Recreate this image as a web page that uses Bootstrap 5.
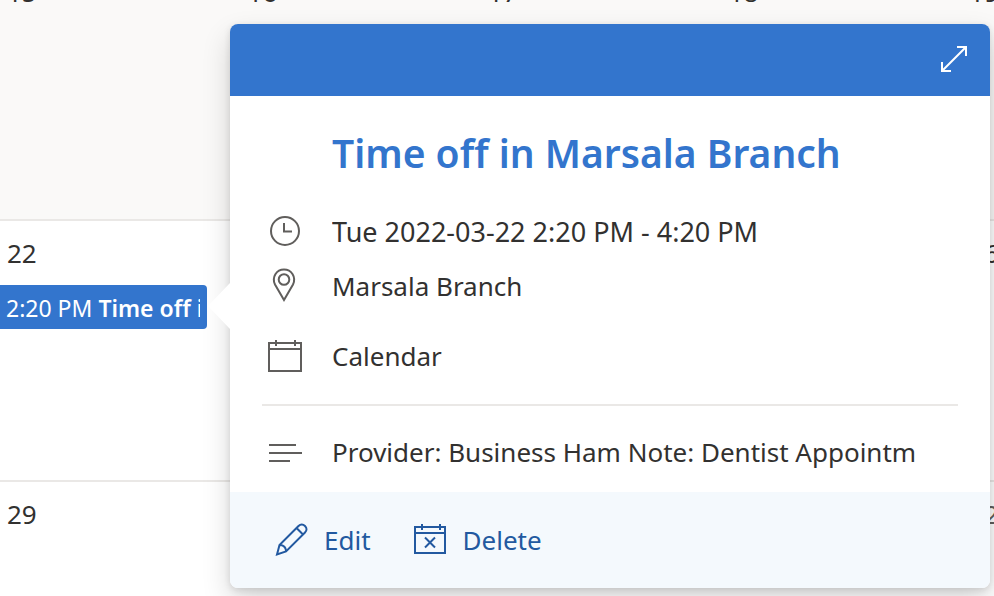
<!DOCTYPE html>
<html lang="en">
<head>
<meta charset="utf-8">
<meta name="viewport" content="width=device-width, initial-scale=1">
<title>Calendar</title>
<link href="https://cdn.jsdelivr.net/npm/bootstrap@5.3.0/dist/css/bootstrap.min.css" rel="stylesheet">
<style>
body { font-family: "Noto Sans", "Open Sans", sans-serif; font-size: 26px; line-height: 34px; color: #323130; background: #fff; }
/* The month is scrolled down a little, so its first week is partly out of view. */
.month-grid { display: grid; grid-template-columns: repeat(5, 24.2%); grid-auto-rows: 261px; margin-top: -42px; }
.day { border-top: 2px solid #eae8e6; padding-top: 15px; min-width: 0; }
.day time { display: block; padding-left: 7px; }
.day-past { background: #faf9f8; }
.day-next time { color: #605e5c; }
.event-chip { width: 86%; height: 44px; margin-top: 15px; padding: 0 7px 0 6px; border: 0; border-radius: 0 4px 4px 0; background: #3375cd; color: #fff; font-size: 23px; line-height: 46px; text-align: left; }
.event-chip span { display: block; height: 44px; overflow: hidden; white-space: nowrap; }
.event-chip b { font-weight: 600; }
.event-card { position: absolute; top: 24px; left: 230px; right: 4px; background: #fff; border-radius: 8px; box-shadow: 0 13px 29px rgba(0,0,0,.16), 0 2px 7px rgba(0,0,0,.12); }
.event-card::before { content: ""; position: absolute; left: -22px; top: 259px; width: 22px; height: 46px; background: #fff; clip-path: polygon(100% 0, 0 50%, 100% 100%); }
.event-head { height: 72px; padding: 0 16px 2px 0; background: #3375cd; border-radius: 8px 8px 0 0; }
.icon-btn { width: 40px; height: 40px; color: #fff; }
.event-body { padding: 30px 32px 13px; }
.event-title { margin: 0 0 25px 70px; font-size: 39px; line-height: 54px; font-weight: 600; color: #3375cd; }
.detail { display: grid; grid-template-columns: 70px 1fr; align-items: center; height: 54px; white-space: nowrap; }
.detail svg { margin-left: 4px; color: #605e5c; }
.detail span { overflow: hidden; }
.detail-when { font-size: 27px; }
.event-rule { margin: 21px 0 19px; border-top: 2px solid #eae8e6; opacity: 1; }
.event-foot { height: 96px; padding-left: 44px; gap: 42px; background: #f4f9fd; border-radius: 0 0 8px 8px; }
.action { gap: 16px; color: #2259a0; font-size: 26px; line-height: 34px; }
svg { display: block; flex: none; fill: none; stroke: currentColor; stroke-width: 2; }
</style>
<script src="https://cdn.jsdelivr.net/npm/bootstrap@5.3.0/dist/js/bootstrap.bundle.min.js"></script>
</head>
<body>
<main class="vh-100 position-relative overflow-hidden">
  <div class="month-grid">
    <div class="day day-past"><time>15</time></div>
    <div class="day day-past"><time>16</time></div>
    <div class="day day-past"><time>17</time></div>
    <div class="day day-past"><time>18</time></div>
    <div class="day day-past"><time>19</time></div>
    <div class="day"><time>22</time>
      <button type="button" class="event-chip d-block"><span>2:20 PM <b>Time off in</b></span></button>
    </div>
    <div class="day"></div>
    <div class="day"></div>
    <div class="day"></div>
    <div class="day"><time>26</time></div>
    <div class="day"><time>29</time></div>
    <div class="day"></div>
    <div class="day"></div>
    <div class="day"></div>
    <div class="day day-next"><time>02</time></div>
  </div>

  <section class="event-card" role="dialog" aria-labelledby="event-title">
    <header class="event-head d-flex align-items-center justify-content-end">
      <button type="button" class="icon-btn btn p-0 border-0 d-flex align-items-center justify-content-center" aria-label="Expand event">
        <svg width="28" height="28" viewBox="0 0 28 28"><path d="M2 26 26 2M17 2h9v9M2 17v9h9"/></svg>
      </button>
    </header>
    <div class="event-body">
      <h1 class="event-title" id="event-title">Time off in Marsala Branch</h1>
      <div class="detail detail-when">
        <svg width="38" height="34" viewBox="0 0 38 34"><circle cx="19" cy="16" r="14"/><path d="M18 8v8.500h8"/></svg>
        <span>Tue 2022-03-22 2:20 PM - 4:20 PM</span>
      </div>
      <div class="detail">
        <svg width="36" height="36" viewBox="0 0 36 36"><path d="M18 32 9 16.500C5.500 9 10.500 1.500 18 1.500s12.500 7.500 9 15z"/><circle cx="18" cy="11.500" r="5.300"/></svg>
        <span>Marsala Branch</span>
      </div>
      <div class="detail mt-3">
        <svg width="38" height="34" viewBox="0 0 38 34"><path d="M3 4h32v28H3zM3 10h32M10 1v6M29 1v6"/></svg>
        <span>Calendar</span>
      </div>
      <hr class="event-rule">
      <div class="detail">
        <svg width="38" height="34" viewBox="0 0 38 34"><path d="M3 10h27M3 18h33M3 26h21"/></svg>
        <span>Provider: Business Ham Note: Dentist Appointm</span>
      </div>
    </div>
    <footer class="event-foot d-flex align-items-center">
      <button type="button" class="action btn p-0 border-0 d-flex align-items-center">
        <svg width="34" height="34" viewBox="0 0 34 34"><path d="M3 31.500 5.500 22 24.500 3C26.500 1 29 1 31 3s2 4.500 0 6.500L12 28.500zM5.500 22c4 0 6.500 2.500 6.500 6.500M22.500 5l6.500 6.500"/></svg>
        Edit
      </button>
      <button type="button" class="action btn p-0 border-0 d-flex align-items-center">
        <svg width="34" height="34" viewBox="0 0 34 34"><path d="M2 4h30v26H2zM2 10h30M9 1v6M27 1v6M12 14.500l10 10M22 14.500l-10 10"/></svg>
        Delete
      </button>
    </footer>
  </section>
</main>
</body>
</html>
